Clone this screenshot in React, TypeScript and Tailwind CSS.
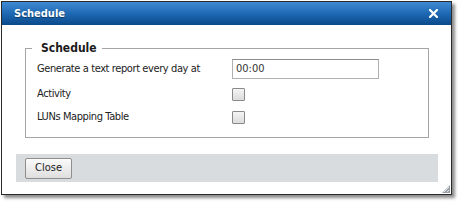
import React from "react";

const font = { fontFamily: '"DejaVu Sans Condensed", "DejaVu Sans", sans-serif' };

function Check() {
  return (
    <div className="w-[13px] h-[13px] border border-[#8a8a8a] rounded-[1px] bg-gradient-to-b from-[#f4f4f4] to-[#dcdcdc]" />
  );
}

export default function App() {
  return (
    <div className="w-[458px] h-[202px] bg-white pt-[1px] pl-[1px]" style={font}>
      <div className="relative w-[451px] h-[194px] border border-[#2a2a2a] bg-white flex flex-col shadow-[3px_3px_3px_rgba(0,0,0,0.45)]">
        <div className="h-[23px] shrink-0 flex items-center justify-between pl-[12px] pr-[13px] bg-gradient-to-b from-[#3f8bd3] via-[#1e69b3] to-[#0b4a8b]">
          <span className="text-white font-bold text-[11px] leading-none [text-shadow:0_1px_1px_rgba(0,0,0,0.4)]">Schedule</span>
          <svg width="9" height="9" viewBox="0 0 9 9">
            <path d="M1 1 L8 8 M8 1 L1 8" stroke="white" strokeWidth="2.2" strokeLinecap="square" />
          </svg>
        </div>
        <div className="flex-1 flex flex-col pt-[15px] pl-[23px] pr-[22px]">
          <fieldset className="border border-[#a5a5a5] pl-[11px] pr-[10px] pb-[13px] pt-[3px]">
            <legend className="-ml-[5px] pl-[9px] pr-[5px] text-[12px] font-bold text-[#1a1a1a] leading-[16px]">Schedule</legend>
            <div className="flex flex-col text-[11px] tracking-[-0.4px] text-[#222]">
              <div className="flex items-center h-[20px]">
                <span className="w-[195px]">Generate a text report every day at</span>
                <div className="w-[147px] h-[20px] border border-[#b0b0b0] border-t-[#8c8c8c] bg-white flex items-center pl-[3px] text-[#333] tracking-normal">00:00</div>
              </div>
              <div className="flex items-center h-[13px] mt-[9px]">
                <span className="w-[195px]">Activity</span>
                <Check />
              </div>
              <div className="flex items-center h-[13px] mt-[10px]">
                <span className="w-[195px]">LUNs Mapping Table</span>
                <Check />
              </div>
            </div>
          </fieldset>
          <div className="mt-[16px] -mx-[9px] h-[28px] bg-[#d9dcdf] flex items-center pl-[9px]">
            <button className="w-[47px] h-[21px] border border-[#8e8e8e] rounded-[2px] bg-gradient-to-b from-[#fbfbfb] to-[#dedede] text-[11px] text-[#222]">Close</button>
          </div>
        </div>
        <svg className="absolute right-[1px] bottom-[1px]" width="8" height="8" viewBox="0 0 8 8">
          <path d="M8 0 L8 8 L0 8 Z" fill="#9aa0a6" />
          <path d="M7 2 L2 7 M7 5 L5 7" stroke="#dfe3e6" strokeWidth="1" />
        </svg>
      </div>
    </div>
  );
}
